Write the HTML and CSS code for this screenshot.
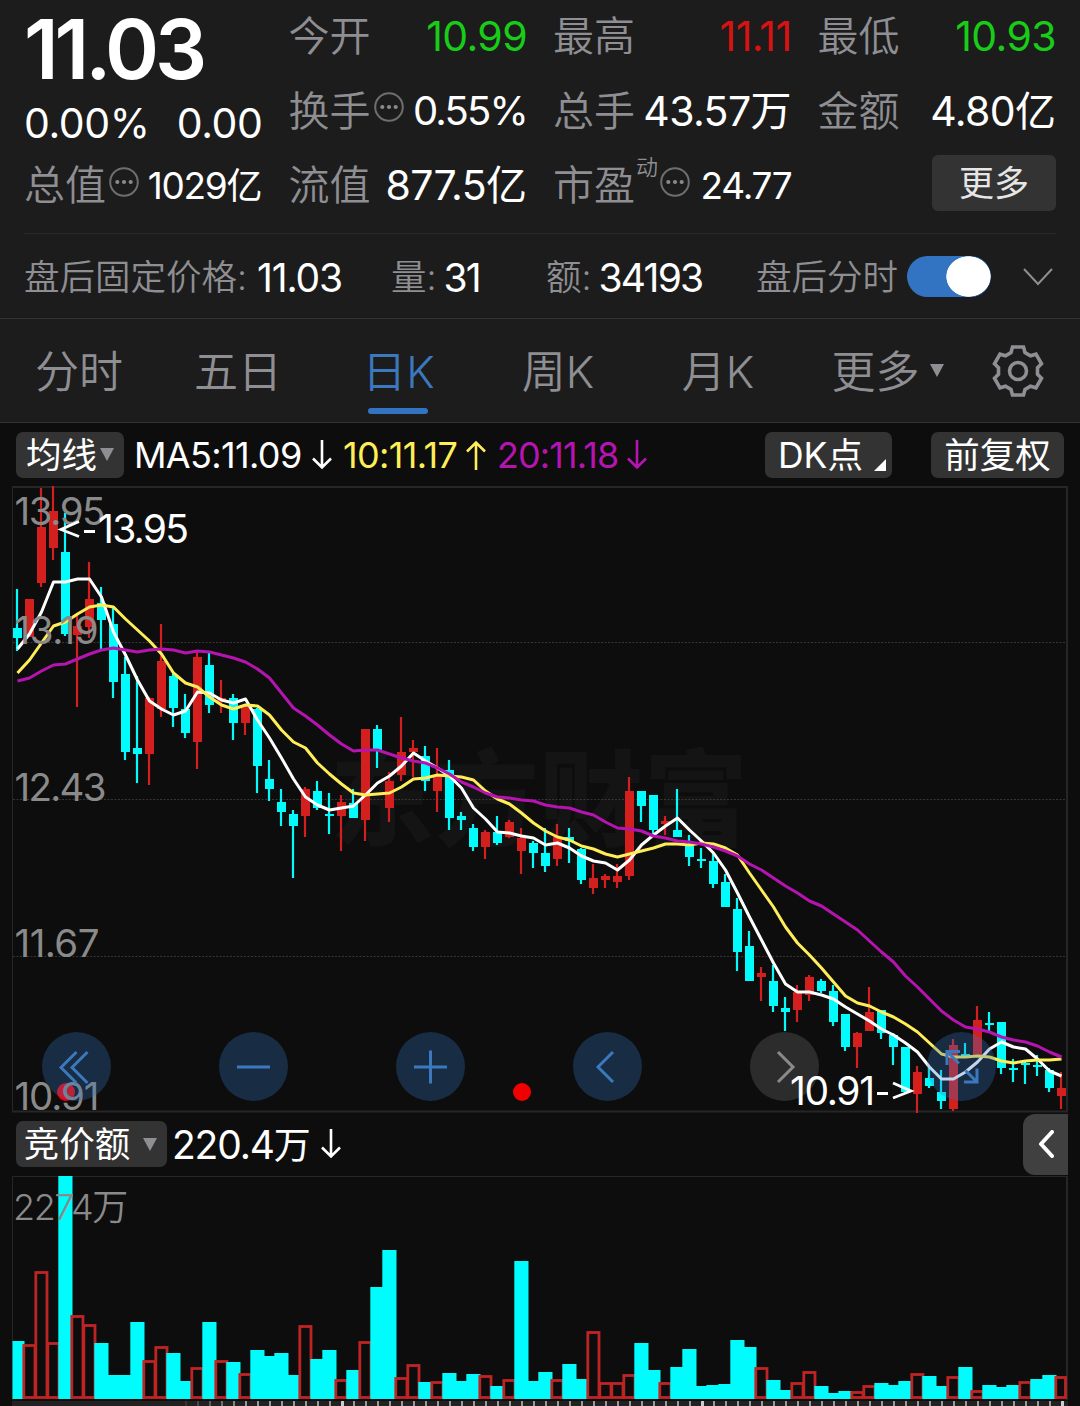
FILE: index.html
```html
<!DOCTYPE html>
<html lang="zh-CN">
<head>
    <meta charset="UTF-8">
    <meta name="viewport" content="width=device-width, initial-scale=1.0">
    <title>日K</title>
    <link rel="stylesheet" href="styles.css">
</head>
<body>
<svg class="defs" width="0" height="0">
    <symbol id="icon-dots" viewBox="0 0 30 30">
        <circle cx="15" cy="15" r="13.8" fill="none" stroke="#6e6e6e" stroke-width="2"/>
        <circle cx="8.3" cy="15" r="2.1" fill="#8a8a8a"/>
        <circle cx="15" cy="15" r="2.1" fill="#8a8a8a"/>
        <circle cx="21.7" cy="15" r="2.1" fill="#8a8a8a"/>
    </symbol>
    <symbol id="icon-down" viewBox="0 0 20 30">
        <path d="M10 0v27M1 18.5l9 9 9-9" fill="none" stroke="currentColor" stroke-width="2.6"/>
    </symbol>
</svg>

<header class="quote">
    <div class="quote-main">
        <div class="price">11.03</div>
        <div class="change"><span>0.00%</span><span>0.00</span></div>
    </div>
    <div class="cell"><span class="label">今开</span><span class="value down">10.99</span></div>
    <div class="cell"><span class="label">最高</span><span class="value up">11.11</span></div>
    <div class="cell"><span class="label">最低</span><span class="value down">10.93</span></div>
    <div class="cell"><span class="label">换手</span><svg class="dots"><use href="#icon-dots"/></svg><span class="value mid">0.55%</span></div>
    <div class="cell"><span class="label">总手</span><span class="value">43.57<b>万</b></span></div>
    <div class="cell"><span class="label">金额</span><span class="value">4.80<b>亿</b></span></div>
    <div class="cell"><span class="label">总值</span><svg class="dots"><use href="#icon-dots"/></svg><span class="value small">1029<b>亿</b></span></div>
    <div class="cell"><span class="label">流值</span><span class="value">877.5<b>亿</b></span></div>
    <div class="cell"><span class="label">市盈</span><sup>动</sup><svg class="dots"><use href="#icon-dots"/></svg><span class="value small">24.77</span></div>
    <div class="cell"><button class="more">更多</button></div>
</header>

<section class="after-hours">
    <div class="ah-price"><span>盘后固定价格:</span><em>11.03</em></div>
    <div class="ah-volume"><span>量:</span><em>31</em></div>
    <div class="ah-amount"><span>额:</span><em>34193</em></div>
    <div class="ah-switch"><span>盘后分时</span><i class="toggle"></i></div>
    <svg class="chevron" viewBox="0 0 30 18"><path d="M1 1l14 15L29 1" fill="none" stroke="#8e8e93" stroke-width="2"/></svg>
</section>

<nav class="tabs">
    <a>分时</a>
    <a>五日</a>
    <a class="active">日K</a>
    <a>周K</a>
    <a>月K</a>
    <a>更多<i class="caret"></i></a>
    <svg class="gear" viewBox="-26 -26 52 52">
        <path d="M-5.5-24H5.5L7-18.5 12.5-15.3 18-16.8 23.5-7.2 19.5-3.2V3.2L23.5 7.2 18 16.8 12.5 15.3 7 18.5 5.5 24H-5.5L-7 18.5-12.5 15.3-18 16.8-23.5 7.2-19.5 3.2V-3.2L-23.5-7.2-18-16.8-12.5-15.3-7-18.5Z"/>
        <circle r="8.5"/>
    </svg>
</nav>

<div class="bar ma-bar">
    <button class="chip chip-ma">均线<i class="caret"></i></button>
    <span class="ma ma5">MA5:11.09</span><svg class="arrow"><use href="#icon-down"/></svg>
    <span class="ma ma10">10:11.17</span><svg class="arrow arrow-up"><use href="#icon-down"/></svg>
    <span class="ma ma20">20:11.18</span><svg class="arrow arrow-20"><use href="#icon-down"/></svg>
    <button class="chip chip-dk">DK点</button>
    <button class="chip chip-fq">前复权</button>
</div>

<section class="chart">
    <svg class="kline" viewBox="0 486 1080 626">
        <text class="watermark" x="330" y="838" textLength="418">东方财富</text>
        <path class="grid" d="M13 642.5H1066M13 799.5H1066M13 956.5H1066"/>
        <path class="frame" d="M12.5 486V1112"/>
        <path class="frame frame-thick" d="M12 487H1068M1067 486V1112M12 1111.5H1068"/>
        <g id="candles"></g>
        <polyline id="ma5" class="line line5"/>
        <polyline id="ma10" class="line line10"/>
        <polyline id="ma20" class="line line20"/>
        <circle class="event" cx="66" cy="1092" r="9"/>
        <circle class="event" cx="522" cy="1092" r="9"/>
        <g class="axis">
            <text x="14.5" y="524.5" textLength="91">13.95</text>
            <text x="14.5" y="643.5" textLength="84">13.19</text>
            <text x="14.5" y="800.5" textLength="92">12.43</text>
            <text x="14.5" y="956.5" textLength="85">11.67</text>
            <text x="14.5" y="1109.5" textLength="85">10.91</text>
        </g>
    </svg>
    <div class="controls">
        <button><svg viewBox="0 0 69 69"><path d="M34.5 20L19 35.5 34.5 51M45.5 20L30 35.5 45.5 51"/></svg></button>
        <button><svg viewBox="0 0 69 69"><path d="M18 35H51"/></svg></button>
        <button><svg viewBox="0 0 69 69"><path d="M18 35H51M34.5 18.5V51.5"/></svg></button>
        <button><svg viewBox="0 0 69 69"><path d="M40 20L25 35 40 50"/></svg></button>
        <button class="off"><svg viewBox="0 0 69 69"><path d="M28 20L43 35 28 50"/></svg></button>
        <button><svg viewBox="0 0 69 69"><path d="M33 19.5H20V33M20.5 20L32 31.5M50 36.5V50H37M49.5 49.5L38.5 38.5"/></svg></button>
    </div>
    <svg class="kline marks" viewBox="0 486 1080 626">
        <path d="M79 521.5L61 529.5 79 536.5M84 531.5H95"/>
        <text x="98" y="542.5" textLength="91">13.95</text>
        <text x="790" y="1104.5" textLength="85">10.91</text>
        <path d="M877 1093.5H888M893 1083L911 1091 893 1098"/>
    </svg>
</section>

<div class="bar vol-bar">
    <button class="chip chip-vol">竞价额<i class="caret"></i></button>
    <span class="vol">220.4<b>万</b></span><svg class="arrow"><use href="#icon-down"/></svg>
    <button class="drawer"><svg viewBox="0 0 16 28"><path d="M14 2L3 14 14 26"/></svg></button>
</div>

<section class="volume">
    <svg viewBox="0 1176 1080 230">
        <path class="frame" d="M12.5 1176V1400"/>
        <path class="frame frame-thick" d="M12 1176H1068M1067 1176V1400"/>
        <g id="bars"></g>
        <text class="axis axis-vol" x="13" y="1220">2274<tspan class="unit">万</tspan></text>
        <rect x="12" y="1401" width="1056" height="5" fill="#222"/>
        <g id="ticks"></g>
    </svg>
</section>

<script src="chart.js"></script>
</body>
</html>
```

FILE: styles.css
```css
* {
    box-sizing: border-box;
}
body {
    margin: 0;
    width: 1080px;
    height: 1406px;
    overflow: hidden;
    background-color: #0d0d0d;
    color: #fff;
    font-family: Inter, "Noto Sans CJK SC", sans-serif;
    font-size: 41px;
    line-height: 1;
}
button {
    border: none;
    padding: 0;
    color: inherit;
    font-family: inherit;
    line-height: 1;
}
b, em, i {
    font-weight: inherit;
    font-style: normal;
}
.defs {
    position: absolute;
}

/* quote header */
.quote {
    display: grid;
    grid-template-columns: repeat(4, 1fr);
    grid-auto-rows: 74.5px;
    column-gap: 26px;
    height: 234px;
    padding: 0 24px;
    background-color: #1c1c1c;
}
.quote-main {
    grid-row: span 2;
}
.price {
    height: 96px;
    line-height: 99px;
    font-size: 82px;
    font-weight: 600;
    letter-spacing: -0.05em;
}
.change {
    display: flex;
    justify-content: space-between;
    line-height: 54px;
    letter-spacing: -0.01em;
}
.cell {
    display: flex;
    align-items: center;
    white-space: nowrap;
    height: 73px;
}
.label {
    color: #8e8e93;
    font-weight: 350;
}
.value {
    margin-left: auto;
    letter-spacing: -0.015em;
}
.value b, .vol b {
    letter-spacing: 0;
    font-size: 41px;
}
.value.mid {
    font-size: 40px;
    letter-spacing: -0.045em;
}
.value.small {
    font-size: 37px;
    letter-spacing: -0.035em;
}
.value.small b {
    font-size: 36px;
}
.up {
    color: #d81212;
}
.down {
    color: #18cc18;
}
.dots {
    width: 30px;
    height: 30px;
    margin: -8px 0 0 3px;
}
sup {
    align-self: flex-start;
    margin: 7px -1px 0 1px;
    font-size: 22px;
    font-weight: 350;
    line-height: 22px;
    color: #8e8e93;
}
.more {
    width: 124px;
    height: 56px;
    margin: -5px 0 0 auto;
    border-radius: 6px;
    background-color: #333;
    color: #e6e6e6;
    font-size: 35px;
}

/* after-hours row */
.after-hours {
    position: relative;
    display: flex;
    align-items: center;
    height: 85px;
    padding: 1px 27px 0 24px;
    background-color: #1c1c1c;
    border-bottom: 1px solid #333;
    font-size: 35.5px;
}
.after-hours::before {
    content: "";
    position: absolute;
    top: -1px;
    left: 24px;
    right: 24px;
    height: 1px;
    background-color: #292929;
}
.after-hours span {
    padding-top: 2px;
    color: #8e8e93;
    font-weight: 350;
}
.after-hours em {
    margin-left: 10px;
    padding-top: 2px;
    font-size: 39px;
    letter-spacing: -0.03em;
}
.after-hours div {
    display: flex;
    align-items: center;
    white-space: nowrap;
}
.ah-price {
    width: 367px;
}
.ah-volume {
    width: 155px;
}
.ah-amount {
    width: 210px;
}
.after-hours .ah-volume em, .after-hours .ah-amount em {
    margin-left: 7px;
    letter-spacing: -0.045em;
}
.toggle {
    width: 84px;
    height: 41px;
    margin-left: 9px;
    border-radius: 21px;
    background: radial-gradient(ellipse 22.5px 20.5px at 61.5px 20.5px, #fff 97%, #3274c1 100%);
}
.chevron {
    width: 30px;
    height: 18px;
    margin-left: auto;
}

/* period tabs */
.tabs {
    display: grid;
    grid-template-columns: 158px 160px 161px 158px 162px 177px 1fr;
    align-items: center;
    height: 104px;
    background-color: #1c1c1c;
    border-bottom: 1px solid #333;
    color: #8e8e93;
    font-size: 44px;
    font-weight: 350;
}
.tabs a {
    position: relative;
    display: flex;
    align-items: center;
    justify-content: center;
    height: 100%;
    padding-top: 3px;
}
.tabs .active {
    color: #3b78bd;
}
.tabs .active::after {
    content: "";
    position: absolute;
    left: 50%;
    bottom: 8px;
    width: 60px;
    height: 6px;
    margin-left: -31px;
    border-radius: 3px;
    background-color: #3274c1;
}
.caret {
    border: 7.5px solid transparent;
    border-top: 13px solid #8e8e93;
    border-bottom: none;
}
.tabs .caret {
    margin: -3px 0 0 10px;
}
.gear {
    width: 52px;
    height: 52px;
    margin-left: 16px;
    fill: none;
    stroke: #8e8e93;
    stroke-width: 3.6;
}

/* indicator bars */
.bar {
    display: flex;
    align-items: center;
    height: 63px;
    padding-left: 16px;
    white-space: nowrap;
}
.chip {
    display: flex;
    align-items: center;
    justify-content: center;
    flex: none;
    height: 46px;
    padding-top: 2px;
    border-radius: 7px;
    background-color: #333;
    font-size: 35.5px;
}
.chip-ma {
    width: 108px;
    margin-right: 10px;
}
.chip-ma .caret {
    margin: -2px 0 0 3px;
}
.chip-dk {
    position: relative;
    width: 127px;
    padding-right: 16px;
    margin-left: auto;
}
.chip-dk::after {
    content: "";
    position: absolute;
    right: 6px;
    bottom: 7px;
    border-left: 12px solid transparent;
    border-bottom: 12px solid #fff;
}
.chip-fq {
    width: 133px;
    margin: 0 16px 0 39px;
}
.ma {
    font-size: 36px;
    letter-spacing: -0.018em;
}
.ma5 {
    width: 178px;
}
.ma10 {
    width: 123px;
    margin-left: 11px;
}
.ma20 {
    width: 130px;
    margin-left: 11px;
    letter-spacing: -0.025em;
}
.ma10, .arrow-up {
    color: #ffee58;
}
.ma20, .arrow-20 {
    color: #b514b0;
}
.arrow {
    flex: none;
    width: 20px;
    height: 30px;
}
.arrow-up {
    transform: scaleY(-1);
}

/* k-line chart */
.chart {
    position: relative;
    height: 626px;
}
.kline {
    display: block;
    width: 1080px;
    height: 626px;
    overflow: visible;
}
.watermark {
    font-size: 104px;
    font-weight: 900;
    fill: #141414;
}
.grid {
    stroke: #363636;
    stroke-dasharray: 2 1.5;
}
.frame {
    fill: none;
    stroke: #262626;
}
.frame-thick {
    stroke-width: 2;
}
.line {
    fill: none;
    stroke-width: 3;
    stroke-linejoin: round;
}
.line5 {
    stroke: #fff;
}
.line10 {
    stroke: #ffee58;
}
.line20 {
    stroke: #b514b0;
}
.event {
    fill: #f20000;
}
.axis {
    fill: #8a8a8a;
    font-size: 38.5px;
    font-weight: 400;
}
.axis-vol {
    font-size: 36px;
    font-weight: 350;
    letter-spacing: -0.04em;
}
.axis .unit {
    font-size: 36px;
}
.controls {
    position: absolute;
    left: 42px;
    bottom: 11px;
    display: flex;
    gap: 108px;
}
.controls button {
    width: 69px;
    height: 69px;
    border-radius: 50%;
    background-color: rgba(50, 116, 193, 0.3);
}
.controls .off {
    background-color: rgba(116, 116, 116, 0.3);
}
.controls svg {
    display: block;
    fill: none;
    stroke: #3b78bd;
    stroke-width: 3;
}
.controls .off svg {
    stroke: #8a8a8a;
}
.marks {
    position: absolute;
    top: 0;
    left: 0;
    font-size: 39px;
    fill: #fff;
}
.marks path {
    fill: none;
    stroke: #fff;
    stroke-width: 2.8;
}

/* volume */
.vol-bar {
    height: 64px;
}
.chip-vol {
    width: 151px;
    padding-right: 2px;
    margin-right: 5px;
}
.chip-vol .caret {
    margin: -2px 0 0 13px;
}
.vol {
    width: 149px;
    font-size: 39px;
    letter-spacing: -0.03em;
}
.vol b {
    font-size: 37px;
}
.drawer {
    display: flex;
    align-items: center;
    justify-content: center;
    width: 45px;
    height: 61px;
    margin: 0 12px 0 auto;
    border-radius: 12px 0 0 12px;
    background-color: #404040;
}
.drawer svg {
    width: 16px;
    height: 28px;
    fill: none;
    stroke: #fff;
    stroke-width: 4;
    stroke-linecap: round;
    stroke-linejoin: round;
}
.volume svg {
    display: block;
    width: 1080px;
    height: 230px;
}
```

FILE: chart.js
```js
// [up, high, low, body top, body bottom, volume top]
const days = [
    [0, 589, 651, 628, 638, 1341], [1, 599, 637, 599, 637, 1344], [1, 488, 587, 527, 583, 1271], [1, 486, 560, 511, 548, 1342],
    [0, 513, 636, 552, 634, 1176], [1, 615, 707, 626, 635, 1315], [1, 562, 638, 599, 627, 1324], [0, 587, 649, 603, 620, 1343],
    [0, 607, 698, 624, 682, 1375], [0, 657, 760, 674, 752, 1375], [0, 676, 783, 748, 754, 1322], [1, 697, 785, 698, 754, 1360],
    [1, 624, 717, 661, 709, 1346], [0, 674, 727, 676, 708, 1353], [0, 694, 738, 709, 733, 1381], [1, 651, 769, 657, 742, 1367],
    [0, 653, 713, 665, 705, 1322], [1, 680, 713, 698, 702, 1360], [0, 694, 740, 698, 723, 1362], [1, 705, 735, 707, 723, 1373],
    [0, 708, 793, 709, 766, 1350], [0, 760, 801, 779, 789, 1356], [0, 789, 826, 802, 812, 1353], [0, 810, 878, 814, 826, 1375],
    [1, 787, 837, 789, 816, 1325], [0, 781, 810, 791, 808, 1359], [0, 793, 834, 814, 816, 1350], [1, 795, 851, 802, 816, 1379],
    [0, 789, 818, 803, 818, 1370], [1, 729, 841, 729, 820, 1341], [0, 725, 768, 729, 750, 1287], [1, 772, 822, 781, 808, 1250],
    [1, 717, 781, 752, 775, 1377], [1, 740, 777, 748, 752, 1364], [0, 746, 791, 756, 781, 1382], [1, 748, 812, 775, 791, 1381],
    [0, 760, 830, 770, 818, 1373], [0, 812, 830, 816, 820, 1381], [0, 824, 851, 828, 847, 1374], [1, 830, 859, 832, 847, 1375],
    [0, 816, 845, 832, 843, 1386], [1, 820, 838, 822, 837, 1379], [1, 828, 874, 838, 851, 1261], [0, 841, 868, 843, 853, 1381],
    [0, 828, 872, 853, 866, 1372], [1, 824, 866, 837, 859, 1379], [0, 828, 863, 837, 841, 1364], [0, 848, 884, 849, 880, 1379],
    [1, 864, 894, 878, 888, 1331], [1, 874, 888, 876, 880, 1382], [1, 864, 888, 876, 882, 1382], [1, 777, 880, 791, 876, 1374],
    [0, 791, 822, 791, 806, 1343], [0, 795, 835, 795, 830, 1370], [1, 816, 835, 821, 824, 1382], [0, 789, 837, 830, 837, 1367],
    [0, 835, 866, 845, 857, 1349], [0, 848, 868, 859, 861, 1386], [0, 853, 888, 861, 884, 1385], [0, 874, 907, 882, 907, 1384],
    [0, 898, 971, 909, 952, 1340], [0, 931, 981, 946, 981, 1347], [1, 967, 1001, 973, 977, 1367], [0, 965, 1012, 981, 1006, 1380],
    [0, 997, 1031, 1008, 1012, 1390], [1, 985, 1022, 992, 1010, 1382], [1, 975, 1001, 977, 995, 1371], [0, 979, 993, 981, 991, 1386],
    [0, 985, 1026, 991, 1022, 1393], [0, 1014, 1051, 1014, 1047, 1391], [1, 1032, 1068, 1033, 1047, 1391], [1, 987, 1031, 1012, 1031, 1385],
    [0, 1010, 1039, 1010, 1033, 1383], [0, 1033, 1065, 1035, 1047, 1385], [0, 1047, 1093, 1047, 1092, 1381], [1, 1066, 1113, 1072, 1094, 1373],
    [0, 1067, 1088, 1078, 1086, 1376], [0, 1070, 1109, 1092, 1101, 1386], [1, 1039, 1111, 1045, 1109, 1376], [0, 1043, 1058, 1054, 1056, 1367],
    [1, 1006, 1056, 1020, 1056, 1390], [0, 1012, 1031, 1023, 1025, 1385], [0, 1022, 1074, 1022, 1068, 1387], [0, 1059, 1082, 1068, 1070, 1385],
    [0, 1062, 1084, 1063, 1065, 1381], [0, 1055, 1076, 1065, 1067, 1379], [0, 1068, 1092, 1070, 1088, 1375], [1, 1072, 1109, 1088, 1096, 1376]
];

// days whose auction volume is drawn as a hollow red bar
const redVolume = [1, 2, 3, 5, 6, 11, 12, 15, 17, 19, 24, 27, 29, 32, 33, 35, 39, 41, 45, 48, 49, 50, 51, 54, 62, 65, 66, 70, 71, 75, 78, 80, 84, 87];

const averages = {
    ma5: [649, 634, 612, 582, 582, 579, 579, 597, 632, 655, 680, 701, 709, 715, 711, 692, 693, 700, 703, 699, 720, 738, 758, 779, 797, 805, 810, 808, 806, 795, 783, 776, 766, 753, 761, 768, 776, 788, 808, 819, 832, 833, 836, 838, 845, 843, 848, 856, 861, 863, 870, 860, 845, 835, 826, 818, 830, 841, 853, 870, 893, 917, 940, 963, 984, 992, 992, 995, 999, 1007, 1014, 1021, 1029, 1035, 1043, 1052, 1067, 1079, 1079, 1072, 1062, 1049, 1042, 1047, 1049, 1059, 1071, 1076],
    ma10: [673, 660, 643, 626, 622, 614, 607, 605, 607, 619, 630, 641, 654, 673, 683, 687, 697, 705, 709, 705, 706, 715, 730, 742, 748, 763, 774, 784, 793, 795, 794, 793, 787, 779, 778, 775, 776, 777, 780, 791, 799, 804, 813, 823, 831, 837, 840, 846, 849, 854, 857, 854, 851, 848, 844, 844, 845, 843, 844, 848, 855, 873, 890, 907, 927, 943, 955, 968, 982, 996, 1003, 1006, 1012, 1017, 1024, 1032, 1043, 1054, 1057, 1057, 1056, 1057, 1061, 1063, 1061, 1060, 1060, 1059],
    ma20: [681, 678, 671, 665, 664, 659, 654, 650, 648, 650, 652, 650, 649, 650, 653, 651, 652, 655, 658, 662, 669, 678, 693, 708, 716, 725, 735, 744, 751, 750, 750, 754, 758, 761, 763, 768, 774, 782, 787, 793, 797, 798, 800, 801, 805, 807, 808, 812, 815, 822, 828, 829, 831, 836, 838, 841, 842, 844, 847, 851, 856, 864, 870, 878, 886, 893, 901, 906, 914, 922, 930, 941, 952, 962, 976, 987, 999, 1011, 1020, 1027, 1029, 1032, 1037, 1040, 1042, 1046, 1052, 1057]
};

const STEP = 12;
const BASE = 1399;
const dayX = i => 17 + i * STEP;

let candles = '';
let bars = '';
days.forEach(([up, high, low, top, bottom, volTop], i) => {
    const x = dayX(i);
    const color = up ? '#d41f1f' : '#00fcfc';
    candles += `<path d="M${x} ${high}V${low}" stroke="${color}" stroke-width="2.2"/>`;
    candles += `<rect x="${x - 4}" y="${top}" width="9" height="${bottom - top}" fill="${color}"/>`;

    const left = Math.max(x - 6.7, 12.5);
    const right = Math.min(x + 7.5, 1067);
    if (redVolume.includes(i)) {
        bars += `<rect x="${left + 1.5}" y="${volTop + 1.5}" width="${right - left - 3}" height="${BASE - volTop - 3}" fill="#0d0d0d" stroke="#bf2424" stroke-width="2.8"/>`;
    } else {
        bars += `<rect x="${left}" y="${volTop}" width="${right - left}" height="${BASE - volTop}" fill="#00fcfc"/>`;
    }
});
document.getElementById('candles').innerHTML = candles;
document.getElementById('bars').innerHTML = bars;

for (const id in averages) {
    const points = averages[id].map((y, i) => `${dayX(i) + 0.5},${y}`).join(' ');
    document.getElementById(id).setAttribute('points', points);
}

// time ruler, fading in from the left
let ticks = '';
for (let i = 14; i < 88; i++) {
    const month = (i - 27) % 30 === 0;
    const opacity = Math.min((i - 13) / 6, 1);
    ticks += `<rect x="${dayX(i)}" y="1401" width="${month ? 3 : 2}" height="5" fill="${month ? '#ccc' : '#999'}" opacity="${opacity}"/>`;
}
document.getElementById('ticks').innerHTML = ticks;
```
